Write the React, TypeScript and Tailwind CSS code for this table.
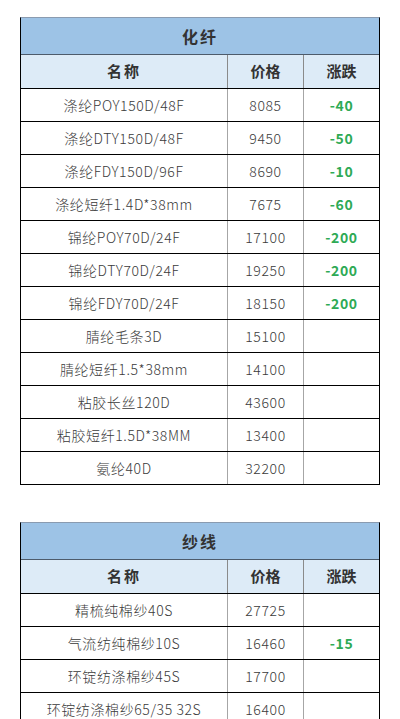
import React from "react";

interface Row {
  name: string;
  price: string;
  change: string;
}

const fibers: Row[] = [
  { name: "涤纶POY150D/48F", price: "8085", change: "-40" },
  { name: "涤纶DTY150D/48F", price: "9450", change: "-50" },
  { name: "涤纶FDY150D/96F", price: "8690", change: "-10" },
  { name: "涤纶短纤1.4D*38mm", price: "7675", change: "-60" },
  { name: "锦纶POY70D/24F", price: "17100", change: "-200" },
  { name: "锦纶DTY70D/24F", price: "19250", change: "-200" },
  { name: "锦纶FDY70D/24F", price: "18150", change: "-200" },
  { name: "腈纶毛条3D", price: "15100", change: "" },
  { name: "腈纶短纤1.5*38mm", price: "14100", change: "" },
  { name: "粘胶长丝120D", price: "43600", change: "" },
  { name: "粘胶短纤1.5D*38MM", price: "13400", change: "" },
  { name: "氨纶40D", price: "32200", change: "" },
];

const yarns: Row[] = [
  { name: "精梳纯棉纱40S", price: "27725", change: "" },
  { name: "气流纺纯棉纱10S", price: "16460", change: "-15" },
  { name: "环锭纺涤棉纱45S", price: "17700", change: "" },
  { name: "环锭纺涤棉纱65/35 32S", price: "16400", change: "" },
];

function PriceTable({ title, rows }: { title: string; rows: Row[] }) {
  return (
    <div className="mx-5 border-l border-r border-b border-black border-t border-t-[#8a9bb0]">
      <div className="h-[37px] bg-[#9dc3e6] flex items-center justify-center text-[16px] font-bold text-[#333] tracking-[2px] border-b border-[#4d5b6b]">
        {title}
      </div>
      <div className="flex h-[33px] bg-[#ddebf7] text-[15px] font-bold text-[#333]">
        <div className="w-[207px] flex items-center justify-center tracking-[2px] border-r border-[#8a8a8a]">名称</div>
        <div className="w-[76px] flex items-center justify-center border-r border-[#8a8a8a]">价格</div>
        <div className="flex-1 flex items-center justify-center">涨跌</div>
      </div>
      {rows.map((r) => (
        <div key={r.name} className="flex h-[33px] border-t border-black text-[14px] text-[#3a3a3a] tracking-[0.6px]">
          <div className="w-[207px] flex items-center justify-center border-r border-[#a6a6a6] font-light">{r.name}</div>
          <div className="w-[76px] flex items-center justify-center border-r border-[#a6a6a6] font-light">{r.price}</div>
          <div className="flex-1 flex items-center justify-center font-bold text-[#2eaa55]">{r.change}</div>
        </div>
      ))}
    </div>
  );
}

export default function App() {
  return (
    <div
      className="bg-white w-[400px] h-[719px] overflow-hidden pt-[17px]"
      style={{ fontFamily: '"Noto Sans CJK SC", "Noto Sans", sans-serif' }}
    >
      <PriceTable title="化纤" rows={fibers} />
      <div className="h-[37px]" />
      <PriceTable title="纱线" rows={yarns} />
    </div>
  );
}
